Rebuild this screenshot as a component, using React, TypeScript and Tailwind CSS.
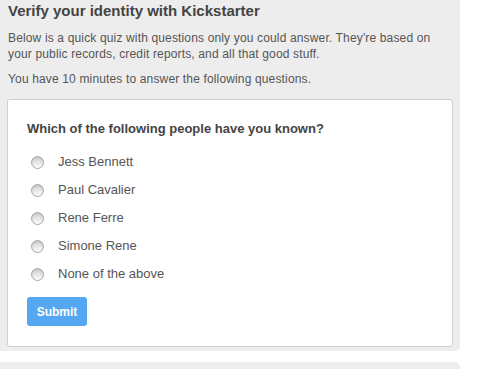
const options = ['Jess Bennett', 'Paul Cavalier', 'Rene Ferre', 'Simone Rene', 'None of the above'];

function Radio() {
  return (
    <span className="w-[13px] h-[13px] rounded-full border border-[#a8a8a8] bg-gradient-to-b from-[#d2d2d2] to-[#fbfbfb] shadow-[inset_0_1px_2px_rgba(0,0,0,0.12)] shrink-0" />
  );
}

export default function App() {
  return (
    <div className="w-[482px] h-[369px] bg-white overflow-hidden text-[#444] font-['Liberation_Sans',Arial,sans-serif]">
      {/* main panel */}
      <div className="w-[460px] bg-[#ededed] rounded-br-[5px] px-[7px] pt-[1px] pb-[4px]">
        <div className="text-[15px] leading-[20px] font-bold text-[#444] pl-[1px]">Verify your identity with Kickstarter</div>
        <p className="w-[430px] text-[12px] leading-[16px] tracking-[0.15px] mt-[9px] pl-[1px] text-[#555]">
          Below is a quick quiz with questions only you could answer. They're based on your public records, credit reports, and all that good stuff.
        </p>
        <p className="text-[12px] leading-[16px] tracking-[0.15px] mt-[9px] pl-[1px] text-[#555]">You have 10 minutes to answer the following questions.</p>
        <div className="mt-[12px] bg-white border border-[#cfcfcf] rounded-[3px] h-[248px] px-[19px] pt-[21px]">
          <div className="text-[13px] leading-[16px] font-bold text-[#444]">Which of the following people have you known?</div>
          <div className="mt-[17px] flex flex-col gap-[12px]">
            {options.map(o => (
              <label key={o} className="flex items-center h-[16px] pl-[4px] text-[13px] text-[#555]">
                <Radio />
                <span className="ml-[14px]">{o}</span>
              </label>
            ))}
          </div>
          <button className="mt-[15px] w-[60px] h-[29px] rounded-[3px] bg-[#56a7f1] text-white text-[12px] font-bold">Submit</button>
        </div>
      </div>
      {/* next panel */}
      <div className="mt-[11px] w-[460px] h-[40px] bg-[#ededed] rounded-tr-[5px]" />
    </div>
  );
}
